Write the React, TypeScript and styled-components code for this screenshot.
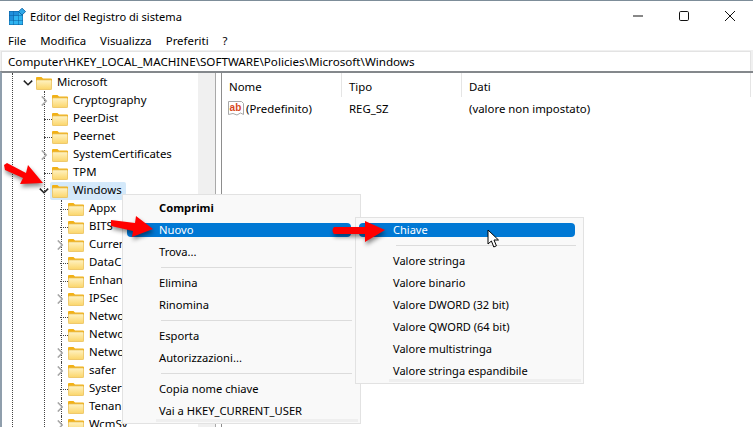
import React from "react";
import styled, { createGlobalStyle } from "styled-components";

const Global = createGlobalStyle`
  html, body { margin: 0; padding: 0; width: 753px; height: 427px; overflow: hidden; background: #fff; }
  body { font-family: "Noto Sans", "Liberation Sans", sans-serif; font-size: 11.4px; color: #000; }
  * { box-sizing: border-box; }
`;

const Win = styled.div`
  position: relative; width: 753px; height: 427px; overflow: hidden; background: #fff;
  display: flex; flex-direction: column; border-top: 1px solid #7d8d99;
`;
const TitleBar = styled.div`
  height: 31px; flex: none; display: flex; align-items: center; padding: 0 0 1px 9px;
`;
const TitleText = styled.span`margin-left: 2px; font-size: 11.1px;`;
const Controls = styled.div`
  margin-left: auto; display: flex; align-items: center; gap: 0;
`;
const Ctrl = styled.svg`width: 46px; height: 12px; display: block; overflow: visible;`;
const MenuBar = styled.div`
  height: 18px; flex: none; display: flex; align-items: center; padding-left: 8px; gap: 14px;
`;
const MenuLabel = styled.span`line-height: 18px;`;
const AddressWrap = styled.div`
  height: 21px; flex: none; padding: 1px 2px 0 1px; background: #f0f0f0;
`;
const Address = styled.div`
  height: 20px; background: #fff; border: 1px solid #e3e3e3; border-bottom: 0; padding-left: 6px; line-height: 20px; white-space: nowrap; font-size: 11.65px;
`;
const Panes = styled.div`
  flex: 1; min-height: 0; display: flex; border-top: 2px solid #84888c; border-left: 2px solid #8f9eac;
`;
const Tree = styled.div`
  position: relative; width: 214px; flex: none; overflow: hidden; border-right: 1px solid #a9a9a9; padding-top: 1px;
  &::before { content: ""; position: absolute; left: 10px; top: 0; bottom: 0; border-left: 1px dotted #444; }
  &::after { content: ""; position: absolute; left: 42px; top: 18px; bottom: 0; border-left: 1px dotted #444; }
`;
const TreeBar = styled.div`position: absolute; top: 0; bottom: 0; right: 0; width: 17px; background: #f0f0f0; z-index: 1;`;
const Row = styled.div<{ $level: number }>`
  position: relative; height: 18px; display: flex; align-items: center; white-space: nowrap; z-index: 2;
  padding-left: ${(p) => 18 + (p.$level - 1) * 16}px;
`;
const Expander = styled.span`
  position: relative; width: 16px; height: 18px; flex: none; display: flex; align-items: center; justify-content: center;
`;
const Connector = styled.span`
  position: absolute; left: 8px; width: 8px; top: 9px; border-top: 1px dotted #444;
`;
const Stem = styled.span`
  position: absolute; left: 59px; top: 0; bottom: 0; border-left: 1px dotted #444;
`;
const FolderWrap = styled.span<{ $sel?: boolean }>`
  display: flex; align-items: center; height: 18px; padding-right: 4px; border-radius: 2px; margin-left: ${(p) => (p.$sel ? "-2px" : "0")};
  padding-left: ${(p) => (p.$sel ? "2px" : "0")};
  background: ${(p) => (p.$sel ? "#d4e9fa" : "transparent")};
`;
const Label = styled.span`margin: 0 0 2px 5px; line-height: 16px;`;
const Splitter = styled.div`width: 6px; flex: none; background: #fff; border-right: 1px solid #8d8d8d;`;
const ListPane = styled.div`flex: 1; min-width: 0;`;
const ListHead = styled.div`display: flex; height: 26px; align-items: flex-start;`;
const Col = styled.div<{ $w: number }>`
  width: ${(p) => p.$w}px; flex: none; height: 24px; line-height: 28px; padding-left: 7px; border-right: 1px solid #e5e5e5;
`;
const ListRow = styled.div`display: flex; height: 18px; align-items: center;`;
const Cell = styled.div<{ $w: number; $pad: number }>`
  width: ${(p) => p.$w}px; flex: none; padding-left: ${(p) => p.$pad}px; display: flex; align-items: center; white-space: nowrap;
`;
const ValueName = styled.span`margin-left: 2px;`;

const Menu = styled.div<{ $x: number; $y: number; $w: number; $z: number; $top: number; $fs: number }>`
  position: absolute; left: ${(p) => p.$x}px; top: ${(p) => p.$y}px; width: ${(p) => p.$w}px; z-index: ${(p) => p.$z};
  background: #f9f9f9; border: 1px solid #e2e2e2; display: flex; flex-direction: column;
  padding: ${(p) => p.$top}px 0 1px; font-size: ${(p) => p.$fs}px;
`;
const MenuStrip = styled.span<{ $l: number; $r: number }>`
  position: absolute; left: ${(p) => p.$l}px; right: ${(p) => p.$r}px; bottom: 1px; height: 3px; background: #efefef;
`;
const Item = styled.div<{ $pad: number; $r: number; $l: number; $active?: boolean; $bold?: boolean }>`
  position: relative;
  height: 14px; margin: 4px ${(p) => p.$r}px 4px ${(p) => p.$l}px; padding-left: ${(p) => p.$pad}px; line-height: 14px; border-radius: 4px; white-space: nowrap;
  background: ${(p) => (p.$active ? "#0078d4" : "transparent")};
  color: ${(p) => (p.$active ? "#fff" : "#000")};
  font-weight: ${(p) => (p.$bold ? 700 : 400)};
`;
const Sep = styled.div<{ $l: number; $r: number }>`
  height: 1px; background: #dcdcdc; margin: 4px ${(p) => p.$r}px 4px ${(p) => p.$l}px; flex: none;
`;
const Overlay = styled.svg<{ $x: number; $y: number; $w: number; $h: number }>`
  position: absolute; left: ${(p) => p.$x}px; top: ${(p) => p.$y}px; width: ${(p) => p.$w}px; height: ${(p) => p.$h}px; z-index: 10; overflow: visible;
`;

const Folder = () => (
  <svg width="16" height="13" viewBox="0 0 16 13" style={{ flex: "none", display: "block" }}>
    <path d="M0 2.5V1Q0 0 1 0H5.5L7 1.5H15Q16 1.5 16 2.5V4H0Z" fill="#f2b116" />
    <rect x="0.4" y="2.9" width="15.2" height="9.7" rx="0.8" fill="url(#fg)" stroke="#e9bd52" strokeWidth="0.8" />
  </svg>
);

const Chevron = ({ open }: { open?: boolean }) => (
  <svg width="10" height="10" viewBox="0 0 10 10">
    {open ? (
      <path d="M0.8 2.6L5 6.8L9.2 2.6" fill="none" stroke="#222" strokeWidth="1.5" />
    ) : (
      <path d="M2.8 0.4L7.2 5L2.8 9.6" fill="none" stroke="#a6a6a6" strokeWidth="1.5" />
    )}
  </svg>
);

type Node = { name: string; level: number; kind: "open" | "closed" | "leaf"; sel?: boolean };
const nodes: Node[] = [
  { name: "Microsoft", level: 1, kind: "open" },
  { name: "Cryptography", level: 2, kind: "closed" },
  { name: "PeerDist", level: 2, kind: "leaf" },
  { name: "Peernet", level: 2, kind: "leaf" },
  { name: "SystemCertificates", level: 2, kind: "closed" },
  { name: "TPM", level: 2, kind: "leaf" },
  { name: "Windows", level: 2, kind: "open", sel: true },
  { name: "Appx", level: 3, kind: "leaf" },
  { name: "BITS", level: 3, kind: "leaf" },
  { name: "Curren", level: 3, kind: "closed" },
  { name: "DataC", level: 3, kind: "leaf" },
  { name: "Enhan", level: 3, kind: "leaf" },
  { name: "IPSec", level: 3, kind: "closed" },
  { name: "Netwo", level: 3, kind: "leaf" },
  { name: "Netwo", level: 3, kind: "leaf" },
  { name: "Netwo", level: 3, kind: "closed" },
  { name: "safer", level: 3, kind: "closed" },
  { name: "Syster", level: 3, kind: "leaf" },
  { name: "Tenan", level: 3, kind: "closed" },
  { name: "WcmSv", level: 3, kind: "closed" },
];

const RegIcon = () => (
  <svg width="19" height="17" viewBox="0 0 19 17" style={{ flex: "none" }}>
    <rect x="0" y="3" width="14" height="14" fill="#0a5d9e" />
    {[0, 1, 2].map((r) =>
      [0, 1, 2].map((c) => (
        <rect key={`${r}${c}`} x={0.5 + c * 4.5} y={3.5 + r * 4.5} width="4" height="4" fill={r + c > 1 ? "#2fb4f0" : "#1f8fdc"} />
      ))
    )}
    <path d="M13 0.2L16.6 3.6L13 7L9.6 3.6Z" fill="#2fa8e8" stroke="#0a5d9e" strokeWidth="0.8" />
  </svg>
);

const AbIcon = () => (
  <svg width="16" height="16" viewBox="0 0 16 16" style={{ flex: "none" }}>
    <path d="M0.5 1.5H13.5L15.5 3.5V14.5L12.5 13L9 15L5 13.5L0.5 14.5Z" fill="#fff" stroke="#a8a8a8" />
    <text x="1.6" y="10.5" fontFamily="Liberation Sans, sans-serif" fontWeight="700" fontSize="10" fill="#d8481c">ab</text>
  </svg>
);

const Arrow = ({ d, x, y, w, h }: { d: string; x: number; y: number; w: number; h: number }) => (
  <Overlay $x={x} $y={y} $w={w} $h={h} viewBox={`${x} ${y} ${w} ${h}`} style={{ filter: "drop-shadow(1px 3px 2px rgba(0,0,0,0.45))" }}>
    <path d={d} fill="#f00" />
  </Overlay>
);

export default function App() {
  return (
    <>
      <Global />
      <Win>
        <svg width="0" height="0" style={{ position: "absolute" }}>
          <defs>
            <linearGradient id="fg" x1="0" y1="0" x2="0" y2="1">
              <stop offset="0" stopColor="#fff3c4" />
              <stop offset="1" stopColor="#fbd568" />
            </linearGradient>
          </defs>
        </svg>
        <TitleBar>
          <RegIcon />
          <TitleText>Editor del Registro di sistema</TitleText>
          <Controls>
            <Ctrl viewBox="0 0 46 12"><path d="M18 6H28" stroke="#111" strokeWidth="1" /></Ctrl>
            <Ctrl viewBox="0 0 46 12"><rect x="18.5" y="1.5" width="9" height="9" rx="1.2" fill="none" stroke="#111" /></Ctrl>
            <Ctrl viewBox="0 0 46 12"><path d="M18 1L28 11M28 1L18 11" stroke="#111" strokeWidth="1" /></Ctrl>
          </Controls>
        </TitleBar>
        <MenuBar>
          {["File", "Modifica", "Visualizza", "Preferiti", "?"].map((m) => (
            <MenuLabel key={m}>{m}</MenuLabel>
          ))}
        </MenuBar>
        <AddressWrap>
          <Address>Computer\HKEY_LOCAL_MACHINE\SOFTWARE\Policies\Microsoft\Windows</Address>
        </AddressWrap>
        <Panes>
          <Tree>
            <TreeBar />
            {nodes.map((n, i) => (
              <Row key={i} $level={n.level}>
                {n.level === 3 && <Stem />}
                <Expander>
                  {n.kind === "leaf" ? <Connector /> : <Chevron open={n.kind === "open"} />}
                </Expander>
                <FolderWrap $sel={n.sel}>
                  <Folder />
                  <Label>{n.name}</Label>
                </FolderWrap>
              </Row>
            ))}
          </Tree>
          <Splitter />
          <ListPane>
            <ListHead>
              <Col $w={120}>Nome</Col>
              <Col $w={120}>Tipo</Col>
              <Col $w={289}>Dati</Col>
            </ListHead>
            <ListRow>
              <Cell $w={120} $pad={6}><AbIcon /><ValueName>(Predefinito)</ValueName></Cell>
              <Cell $w={120} $pad={7}>REG_SZ</Cell>
              <Cell $w={280} $pad={7}>(valore non impostato)</Cell>
            </ListRow>
          </ListPane>
        </Panes>

        <Menu $x={122} $y={193} $w={239} $z={5} $top={2} $fs={11.2}>
          <Item $l={4} $r={9} $pad={32} $bold>Comprimi</Item>
          <Item $l={4} $r={9} $pad={32} $active>Nuovo</Item>
          <Item $l={4} $r={9} $pad={32}>Trova...</Item>
          <Sep $l={38} $r={8} />
          <Item $l={4} $r={9} $pad={32}>Elimina</Item>
          <Item $l={4} $r={9} $pad={32}>Rinomina</Item>
          <Sep $l={38} $r={8} />
          <Item $l={4} $r={9} $pad={32}>Esporta</Item>
          <Item $l={4} $r={9} $pad={32}>Autorizzazioni...</Item>
          <Sep $l={38} $r={8} />
          <Item $l={4} $r={9} $pad={32}>Copia nome chiave</Item>
          <Item $l={4} $r={9} $pad={32}>Vai a HKEY_CURRENT_USER</Item>
          <MenuStrip $l={33} $r={2} />
        </Menu>
        <Menu $x={355} $y={216} $w={229} $z={6} $top={1} $fs={11.05}>
          <Item $l={3} $r={8} $pad={34} $active>Chiave</Item>
          <Sep $l={40} $r={7} />
          <Item $l={3} $r={8} $pad={34}>Valore stringa</Item>
          <Item $l={3} $r={8} $pad={34}>Valore binario</Item>
          <Item $l={3} $r={8} $pad={34}>Valore DWORD (32 bit)</Item>
          <Item $l={3} $r={8} $pad={34}>Valore QWORD (64 bit)</Item>
          <Item $l={3} $r={8} $pad={34}>Valore multistringa</Item>
          <Item $l={3} $r={8} $pad={34}>Valore stringa espandibile</Item>
          <MenuStrip $l={33} $r={2} />
        </Menu>

        <Arrow x={0} y={155} w={50} h={35} d="M4 164L7 162L26 172L28 164L43 182L20 183L23 177L5 169Z" />
        <Arrow x={105} y={210} w={55} h={32} d="M111 219L135 222L136 215L153 228L132 236L133 230L111 225Z" />
        <Arrow x={328} y={215} w={62} h={30} d="M334 226L365 226L365 220L385 229L365 241L365 233L334 233Q331 229.5 334 226Z" />

        <Overlay $x={487} $y={228} $w={12} $h={20} viewBox="0 0 12 20">
          <path d="M1 1V15L4.4 12L6.8 18L9.4 16.8L7 11H11.5Z" fill="#fff" stroke="#000" strokeWidth="1" strokeLinejoin="round" />
        </Overlay>
      </Win>
    </>
  );
}
